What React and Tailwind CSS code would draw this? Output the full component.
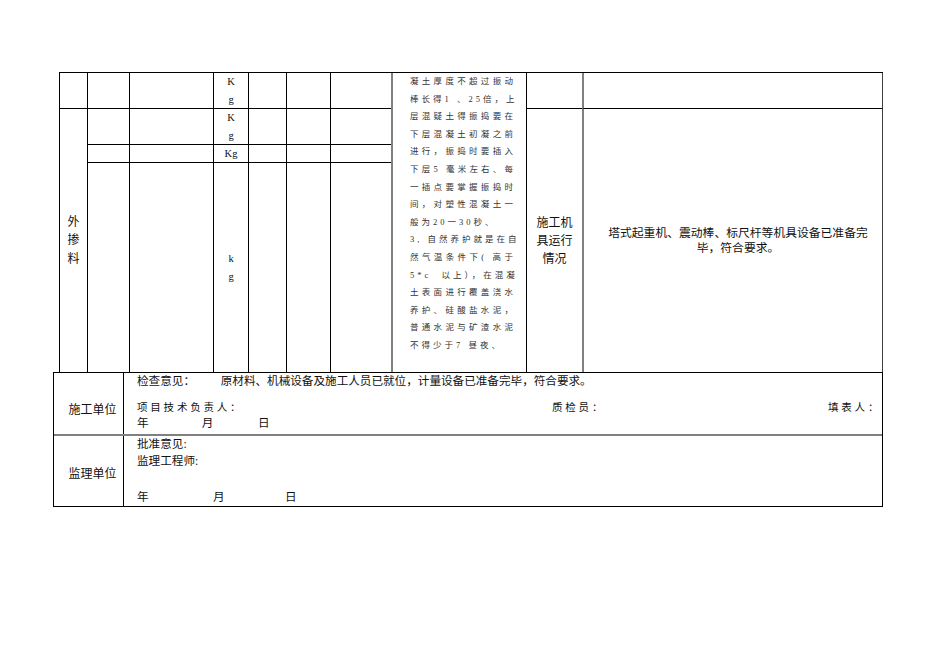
import React from 'react';

// 混凝土浇筑说明（按原表逐行排版）
const noteLines = [
  { t: '凝土厚度不超过振动', j: true },
  { t: '棒长得1 、25倍，上', j: true },
  { t: '层混疑土得振捣要在', j: true },
  { t: '下层混凝土初凝之前', j: true },
  { t: '进行，振捣时要插入', j: true },
  { t: '下层5 毫米左右、每', j: true },
  { t: '一插点要掌握振捣时', j: true },
  { t: '间，对塑性混凝土一', j: true },
  { t: '般为20一30秒、', j: false },
  { t: '3, 自然养护就是在自', j: true },
  { t: '然气温条件下( 高于', j: true },
  { t: '5*c  以上），在混凝', j: true },
  { t: '土表面进行覆盖浇水', j: true },
  { t: '养护、硅酸盐水泥，', j: true },
  { t: '普通水泥与矿渣水泥', j: true },
  { t: '不得少于7 昼夜、', j: false },
];

function Unit({ lines }) {
  return (
    <div className="text-center text-[10.5px] leading-[18px] font-['Liberation_Serif',serif]">
      {lines.map((l, i) => (
        <div key={i}>{l}</div>
      ))}
    </div>
  );
}

export default function App() {
  return (
    <div className="min-h-screen bg-white pt-[72px] pl-[53px] text-[#111] font-['Liberation_Serif','Noto_Sans_CJK_SC',serif]">
      <div className="w-[830px]">
        {/* 上部表格 */}
        <div className="ml-[6px] grid w-[824px] grid-cols-[28px_42px_84px_35px_38px_44px_60px_136px_55px_301px] grid-rows-[36px_36px_18px_209px] border-l border-t border-black">
          {/* 第一行 */}
          <div className="col-start-1 row-start-1 border-r border-b border-black" />
          <div className="col-start-2 row-start-1 border-r border-b border-black" />
          <div className="col-start-3 row-start-1 border-r border-b border-black" />
          <div className="col-start-4 row-start-1 border-r border-b border-black">
            <Unit lines={['K', 'g']} />
          </div>
          <div className="col-start-5 row-start-1 border-r border-b border-black" />
          <div className="col-start-6 row-start-1 border-r border-b border-black" />
          <div className="col-start-7 row-start-1 border-b border-black" />

          {/* 说明列 */}
          <div className="col-start-8 row-start-1 row-span-4 border-l-2 border-r border-l-[#808080] border-r-black pl-[17px]">
            <div className="w-[106px] text-[8.5px] tracking-[3px] leading-[17.6px] text-[#333]">
              {noteLines.map((l, i) => (
                <div key={i} className={l.j ? 'whitespace-pre text-justify [text-align-last:justify]' : 'whitespace-pre'}>
                  {l.t}
                </div>
              ))}
            </div>
          </div>

          <div className="col-start-9 row-start-1 border-b border-black" />
          <div className="col-start-10 row-start-1 border-l-2 border-r border-b border-l-[#808080] border-r-[#404040] border-b-black" />

          {/* 外掺料 */}
          <div className="col-start-1 row-start-2 row-span-3 flex items-center justify-center border-r border-black">
            <div className="text-center text-[12px] leading-[18.5px]">
              外<br />掺<br />料
            </div>
          </div>

          {/* 第二行 */}
          <div className="col-start-2 row-start-2 border-r border-b border-black" />
          <div className="col-start-3 row-start-2 border-r border-b border-black" />
          <div className="col-start-4 row-start-2 border-r border-b border-black">
            <Unit lines={['K', 'g']} />
          </div>
          <div className="col-start-5 row-start-2 border-r border-b border-black" />
          <div className="col-start-6 row-start-2 border-r border-b border-black" />
          <div className="col-start-7 row-start-2 border-b border-black" />

          {/* 第三行 */}
          <div className="col-start-2 row-start-3 border-r border-b border-black" />
          <div className="col-start-3 row-start-3 border-r border-b border-black" />
          <div className="col-start-4 row-start-3 border-r border-b border-black">
            <Unit lines={['Kg']} />
          </div>
          <div className="col-start-5 row-start-3 border-r border-b border-black" />
          <div className="col-start-6 row-start-3 border-r border-b border-black" />
          <div className="col-start-7 row-start-3 border-b border-black" />

          {/* 第四行 */}
          <div className="col-start-2 row-start-4 border-r border-black" />
          <div className="col-start-3 row-start-4 border-r border-black" />
          <div className="col-start-4 row-start-4 flex items-center justify-center border-r border-black">
            <Unit lines={['k', 'g']} />
          </div>
          <div className="col-start-5 row-start-4 border-r border-black" />
          <div className="col-start-6 row-start-4 border-r border-black" />
          <div className="col-start-7 row-start-4" />

          {/* 施工机具运行情况 */}
          <div className="col-start-9 row-start-2 row-span-3 flex items-center justify-center">
            <div className="text-center text-[12px] leading-[18px]">
              施工机<br />具运行<br />情况
            </div>
          </div>
          <div className="col-start-10 row-start-2 row-span-3 flex items-center justify-center border-l-2 border-r border-l-[#808080] border-r-[#404040] pl-[10px]">
            <div className="text-center text-[11.8px] leading-[15px]">
              塔式起重机、震动棒、标尺杆等机具设备已准备完<br />毕，符合要求。
            </div>
          </div>
        </div>

        {/* 下部签字栏 */}
        <div className="border border-black">
          <div className="flex h-[63px] border-b-2 border-[#808080]">
            <div className="flex w-[70px] shrink-0 items-center justify-center border-r border-black pl-[8px] pt-[12px] text-[12px]">
              施工单位
            </div>
            <div className="flex-1 pl-[13px]">
              <div className="h-[27px] text-[11.6px] leading-[18px]">
                <span className="inline-block w-[83.7px]">检查意见：</span>
                原材料、机械设备及施工人员已就位，计量设备已准备完毕，符合要求。
              </div>
              <div className="flex text-[10.5px] leading-[16px] tracking-[2.8px]">
                <span className="w-[415px] shrink-0">项目技术负责人：</span>
                <span className="w-[276px] shrink-0">质检员：</span>
                <span>填表人：</span>
              </div>
              <div className="flex text-[11.6px] leading-[16px]">
                <span className="w-[64.7px]">年</span>
                <span className="w-[56.3px]">月</span>
                <span>日</span>
              </div>
            </div>
          </div>
          <div className="flex h-[70px]">
            <div className="flex w-[70px] shrink-0 items-center justify-center border-r border-black pl-[8px] pt-[6px] text-[12px]">
              监理单位
            </div>
            <div className="flex-1 pl-[13px] text-[11.6px]">
              <div className="leading-[17px]">批准意见:</div>
              <div className="leading-[17px]">监理工程师:</div>
              <div className="mt-[19px] flex leading-[17px]">
                <span className="w-[76px]">年</span>
                <span className="w-[72px]">月</span>
                <span>日</span>
              </div>
            </div>
          </div>
        </div>
      </div>
    </div>
  );
}
